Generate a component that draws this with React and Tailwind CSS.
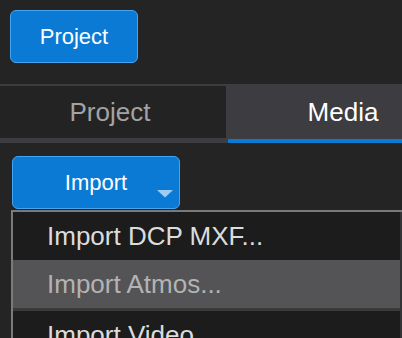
import React from 'react';

const menuItems = [
  { label: 'Import DCP MXF...', active: false },
  { label: 'Import Atmos...', active: true },
  { label: 'Import Video', active: false },
];

const App = () => {
  return (
    <div
      className="w-[402px] h-[338px] overflow-hidden bg-[#242424]"
      style={{ fontFamily: '"Liberation Sans", Arial, sans-serif' }}
    >
      {/* Header */}
      <div className="h-[84px] pt-[10px] pl-[10px]">
        <button className="w-[128px] h-[53px] rounded-[6px] border-[1.5px] border-[#45a5f2] bg-[#0a7ad4] text-white text-[22px] leading-none">
          Project
        </button>
      </div>

      {/* Tabs */}
      <div className="h-[2px] bg-[#3c3c41]" />
      <div className="flex h-[52px] w-[460px]">
        <div className="w-[226px] flex items-center justify-center pr-[6px] bg-[#232323] text-[#a3a3a3] text-[26px]">
          Project
        </div>
        <div className="w-[234px] flex items-center justify-center bg-[#3c3c41] text-white text-[26px]">
          Media
        </div>
      </div>
      <div className="flex h-[5px] bg-[#3c3c41]">
        <div className="w-[228px]" />
        <div className="flex-1 h-[4px] mt-[0.5px] bg-[#0a7ad4]" />
      </div>

      {/* Content */}
      <div className="pt-[13px] pl-[12px]">
        <button className="relative w-[168px] h-[53px] rounded-[6px] border-[1.5px] border-[#45a5f2] bg-[#0a7ad4] text-white text-[22px] leading-none">
          Import
          <svg className="absolute right-[6px] bottom-[10px]" width="16" height="8" viewBox="0 0 16 8">
            <path d="M0 0 L16 0 L8 7.5 Z" fill="#9fcdf1" />
          </svg>
        </button>

        <div className="mt-[1px] -ml-[1px] flex border-l-2 border-t-2 border-[#7a7a7a] bg-[#1c1c1c]">
          <div className="flex-1">
            {menuItems.map((item) => (
              <div key={item.label}>
                <div
                  className={`h-[48px] flex items-center pl-[34px] text-[26px] ${
                    item.active ? 'bg-[#545457] text-[#b3b3b3]' : 'text-[#dcdcdc]'
                  }`}
                >
                  {item.label}
                </div>
                {item.active && <div className="h-[3px] bg-[#3a3a3b]" />}
              </div>
            ))}
          </div>
          <div className="w-[2px] bg-[#333335]" />
        </div>
      </div>
    </div>
  );
};

export default App;
